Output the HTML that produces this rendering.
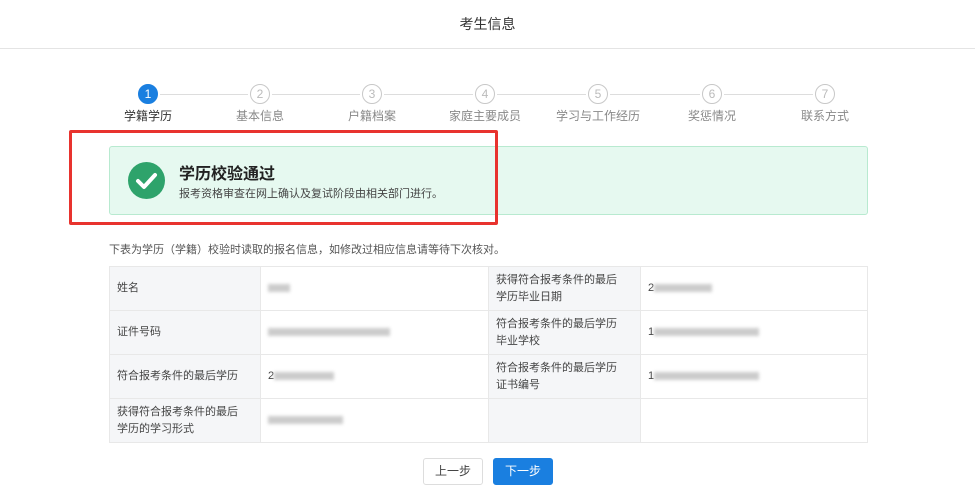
<!DOCTYPE html>
<html><head><meta charset="utf-8"><style>
*{margin:0;padding:0;box-sizing:border-box}
body{width:975px;height:500px;background:#fff;font-family:"Liberation Sans","Noto Sans CJK SC",sans-serif;position:relative;overflow:hidden;color:#333}
.hd{position:absolute;left:0;top:0;width:975px;height:49px;border-bottom:1px solid #e4e4e4;text-align:center;line-height:48px;font-size:14px;color:#333}
.ln{position:absolute;top:94px;height:1px;background:#ddd}
.c{position:absolute;top:84px;width:20px;height:20px;border-radius:50%;border:1px solid #c8c8c8;color:#bbb;font-size:12px;text-align:center;line-height:18px;background:#fff}
.c.a{background:#1a7fe0;border-color:#1a7fe0;color:#fff}
.lb{position:absolute;top:107px;width:110px;margin-left:-55px;text-align:center;font-size:12px;color:#888}
.lb.a{color:#333}
.al{position:absolute;left:109px;top:146px;width:759px;height:69px;background:#e6f9f0;border:1px solid #b8ead0;border-radius:3px}
.red{position:absolute;left:69px;top:130px;width:429px;height:95px;border:3px solid #e8332e;border-radius:2px}
.ok{position:absolute;left:128px;top:162px;width:37px;height:37px;border-radius:50%;background:#2ea36b}
.t1{position:absolute;left:179px;top:160px;font-size:16px;font-weight:bold;color:#222}
.t2{position:absolute;left:179px;top:185px;font-size:11px;color:#444}
.note{position:absolute;left:109px;top:241px;font-size:11px;color:#555}
table{position:absolute;left:109px;top:266px;width:759px;border-collapse:collapse;font-size:11px;color:#444}
td{border:1px solid #e8e8e8;height:44px;padding:0 7px;line-height:17px;vertical-align:middle}
td.k{background:#f5f6f8}
.bl{display:inline-block;height:8px;background:#ccc;filter:blur(1.5px);vertical-align:middle}
.b{position:absolute;top:458px;width:60px;height:27px;border-radius:3px;font-size:12px;text-align:center;line-height:25px}
</style></head><body>
<div class="hd">考生信息</div>
<div class="ln" style="left:160px;width:88px"></div>
<div class="ln" style="left:272px;width:88px"></div>
<div class="ln" style="left:384px;width:89px"></div>
<div class="ln" style="left:497px;width:89px"></div>
<div class="ln" style="left:610px;width:90px"></div>
<div class="ln" style="left:724px;width:89px"></div>
<div class="c a" style="left:138px">1</div>
<div class="c" style="left:250px">2</div>
<div class="c" style="left:362px">3</div>
<div class="c" style="left:475px">4</div>
<div class="c" style="left:588px">5</div>
<div class="c" style="left:702px">6</div>
<div class="c" style="left:815px">7</div>
<div class="lb a" style="left:148px">学籍学历</div>
<div class="lb" style="left:260px">基本信息</div>
<div class="lb" style="left:372px">户籍档案</div>
<div class="lb" style="left:485px">家庭主要成员</div>
<div class="lb" style="left:598px">学习与工作经历</div>
<div class="lb" style="left:712px">奖惩情况</div>
<div class="lb" style="left:825px">联系方式</div>
<div class="al"></div>
<div class="ok"><svg width="37" height="37" viewBox="0 0 37 37"><path d="M10 19l6 6 11-12" fill="none" stroke="#fff" stroke-width="4" stroke-linecap="round" stroke-linejoin="round"/></svg></div>
<div class="t1">学历校验通过</div>
<div class="t2">报考资格审查在网上确认及复试阶段由相关部门进行。</div>
<div class="red"></div>
<div class="note">下表为学历（学籍）校验时读取的报名信息，如修改过相应信息请等待下次核对。</div>
<table>
<tr><td class="k" style="width:151px">姓名</td><td style="width:228px"><span class="bl" style="width:22px"></span></td><td class="k" style="width:152px">获得符合报考条件的最后<br>学历毕业日期</td><td>2<span class="bl" style="width:58px"></span></td></tr>
<tr><td class="k">证件号码</td><td><span class="bl" style="width:122px"></span></td><td class="k">符合报考条件的最后学历<br>毕业学校</td><td>1<span class="bl" style="width:105px"></span></td></tr>
<tr><td class="k">符合报考条件的最后学历</td><td>2<span class="bl" style="width:60px"></span></td><td class="k">符合报考条件的最后学历<br>证书编号</td><td>1<span class="bl" style="width:105px"></span></td></tr>
<tr><td class="k">获得符合报考条件的最后<br>学历的学习形式</td><td><span class="bl" style="width:75px"></span></td><td class="k"></td><td></td></tr>
</table>
<div class="b" style="left:423px;border:1px solid #ddd;color:#444">上一步</div>
<div class="b" style="left:493px;background:#1a7fe0;color:#fff;border:1px solid #1a7fe0">下一步</div>
</body></html>
